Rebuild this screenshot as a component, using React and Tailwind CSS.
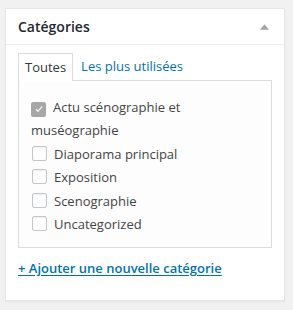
import React from "react";

const categories = [
  { name: "Actu scénographie et muséographie", checked: true },
  { name: "Diaporama principal" },
  { name: "Exposition" },
  { name: "Scenographie" },
  { name: "Uncategorized" },
];

function Checkbox({ checked }) {
  if (checked) {
    return (
      <span className="inline-flex items-center justify-center w-[15px] h-[15px] rounded-[2px] bg-[#a7a7a7] align-[-2px] mr-[7px]">
        <svg viewBox="0 0 12 12" className="w-[10px] h-[10px]">
          <path d="M2.2 6.3 L4.8 8.8 L9.8 2.8" fill="none" stroke="#f4f4f4" strokeWidth="1.6" />
        </svg>
      </span>
    );
  }
  return (
    <span className="inline-block w-[15px] h-[15px] rounded-[2px] border border-[#c4c7ca] bg-white shadow-[inset_0_1px_2px_rgba(0,0,0,0.07)] align-[-2px] mr-[7px]" />
  );
}

export default function App() {
  return (
    <div className="min-h-[310px] bg-[#f1f1f1] pt-[8px] pl-[5px] font-['Open_Sans',sans-serif]">
      <div className="w-[280px] h-[293px] bg-white border border-[#e5e5e5] shadow-[0_1px_1px_rgba(0,0,0,0.04)]">
        <div className="flex items-center justify-between h-[36px] px-[12px] border-b border-[#eeeeee]">
          <h2 className="text-[14px] font-semibold text-[#23282d]">Catégories</h2>
          <svg viewBox="0 0 10 6" className="w-[9px] h-[6px] mr-[3px]">
            <path d="M0 6 L5 0 L10 6 Z" fill="#a0a5aa" />
          </svg>
        </div>
        <div className="px-[12px]">
          <div className="flex items-end mt-[8px] text-[13px] leading-[19px]">
            <div className="border border-[#dddddd] border-b-0 bg-white px-[6px] pt-[4px] pb-[4px] text-[#32373c] -mb-px relative">
              Toutes
            </div>
            <a href="#" className="ml-[8px] pb-[4px] text-[#0073aa]">Les plus utilisées</a>
          </div>
          <div className="h-[168px] border border-[#dddddd] bg-[#fdfdfd] pl-[12px] pr-[12px] pt-[15px]">
            <ul className="text-[13px] leading-[23.4px] text-[#444444]">
              {categories.map((c) => (
                <li key={c.name}>
                  <span className={c.checked ? "" : "pl-px"}>
                    <Checkbox checked={c.checked} />
                  </span>
                  {c.name}
                </li>
              ))}
            </ul>
          </div>
          <a href="#" className="block mt-[11px] text-[13px] font-semibold text-[#0073aa] underline underline-offset-[2px]">
            + Ajouter une nouvelle catégorie
          </a>
        </div>
      </div>
    </div>
  );
}
